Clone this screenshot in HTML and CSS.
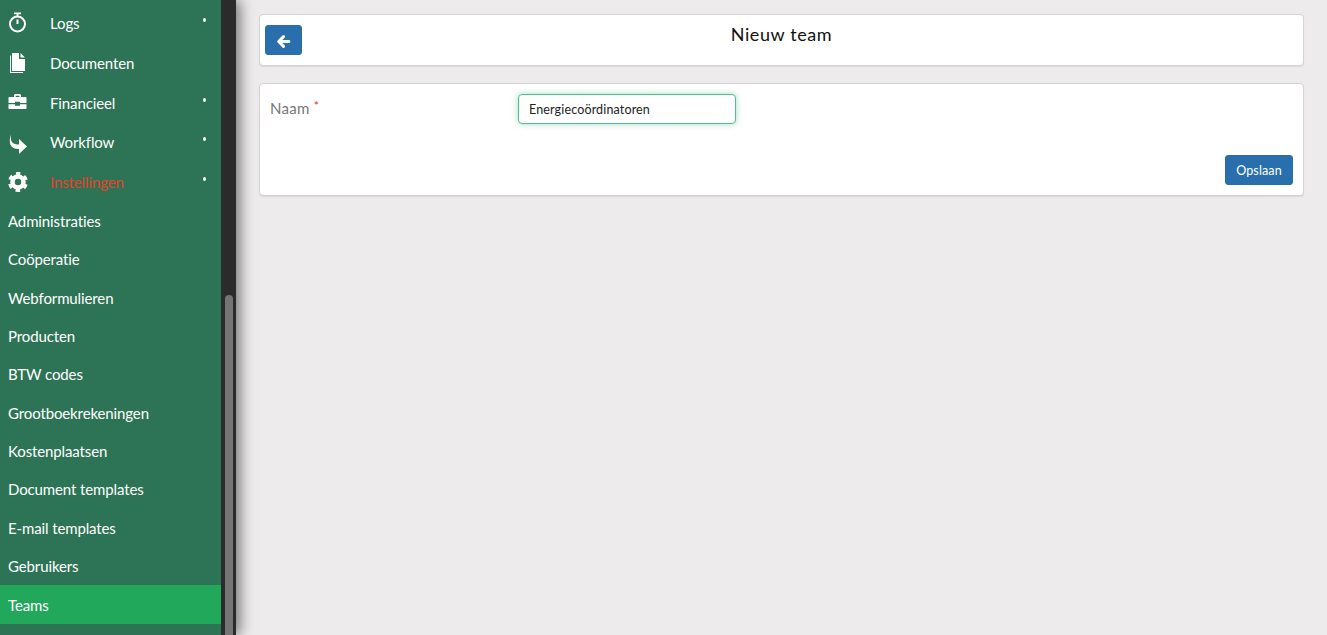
FILE: index.html
```html
<!DOCTYPE html>
<html lang="nl">
<head>
<meta charset="utf-8">
<title>Nieuw team</title>
<link rel="stylesheet" href="styles.css">
</head>
<body>
<div class="app">
  <aside class="sidebar">
    <nav class="nav">
      <a class="item">
        <svg class="icon" viewBox="0 0 20 22"><path fill="none" stroke="#fff" stroke-width="2" d="M9.500 4.500a7.500 7.500 0 1 0 0 15a7.500 7.500 0 1 0 0-15zM9.500 12V7.500"/><path fill="#fff" d="M6 .5h7v1.700h-2.600V5H8.600V2.200H6z"/></svg>
        <span class="label">Logs</span><span class="caret"></span>
      </a>
      <a class="item">
        <svg class="icon" viewBox="0 0 20 22"><path fill="#fff" d="M4 1h7v6h6v12H4z"/><path fill="#fff" d="M12.500 1l4.500 4.500h-4.500zM2 3.500V21h13v-.9H2.900V3.500z"/></svg>
        <span class="label">Documenten</span><span class="caret"></span>
      </a>
      <a class="item">
        <svg class="icon" viewBox="0 0 20 22"><path fill="#fff" fill-rule="evenodd" d="M6 5V3.500C6 2.700 6.700 2 7.500 2h4c.8 0 1.500.7 1.500 1.500V5h4.500c.6 0 1 .4 1 1v5H12V9.700H7V11H.5V6c0-.6.4-1 1-1zM7.700 5h3.600V3.700H7.700zM.5 12.200H7v1.500h5v-1.500h6.500V16c0 .6-.4 1-1 1h-16c-.6 0-1-.4-1-1z"/></svg>
        <span class="label">Financieel</span><span class="caret"></span>
      </a>
      <a class="item">
        <svg class="icon" viewBox="0 0 20 22"><path fill="#fff" d="M3 3.500C2.500 8 3 10.500 5 12c1.500 1 4 1.500 6 1.500V8l8 7.500L11 23v-5c-4.500 0-7.500-1.500-8.700-4.500C1.300 10.500 1.800 6.500 3 3.500z"/></svg>
        <span class="label">Workflow</span><span class="caret"></span>
      </a>
      <a class="item active">
        <svg class="icon" viewBox="0 0 20 22"><circle class="gear-ring" cx="10" cy="11" r="5.500"/><circle class="gear-teeth" cx="10" cy="11" r="8.500" transform="rotate(-90 10 11)"/></svg>
        <span class="label">Instellingen</span><span class="caret"></span>
      </a>
      <a class="sub">Administraties</a>
      <a class="sub">Coöperatie</a>
      <a class="sub">Webformulieren</a>
      <a class="sub">Producten</a>
      <a class="sub">BTW codes</a>
      <a class="sub">Grootboekrekeningen</a>
      <a class="sub">Kostenplaatsen</a>
      <a class="sub">Document templates</a>
      <a class="sub">E-mail templates</a>
      <a class="sub">Gebruikers</a>
      <a class="sub current">Teams</a>
    </nav>
    <div class="track"><div class="thumb"></div></div>
  </aside>
  <main class="main">
    <section class="panel head">
      <button class="btn back" aria-label="Terug">
        <svg viewBox="0 0 14 14" width="15" height="15"><path fill="none" stroke="#fff" stroke-width="2.800" stroke-linecap="round" stroke-linejoin="round" d="M12 7H3M7 2.500L2.500 7L7 11.500"/></svg>
      </button>
      <h1 class="title">Nieuw team</h1>
    </section>
    <section class="panel form">
      <div class="field">
        <label class="name">Naam <span class="req">*</span></label>
        <input class="input" value="Energiecoördinatoren">
      </div>
      <div class="actions"><button class="btn save">Opslaan</button></div>
    </section>
  </main>
</div>
</body>
</html>
```
FILE: styles.css
```css
* { box-sizing: border-box; }
html, body { margin: 0; height: 100%; overflow: hidden; }
body { font-family: "Lato", "Liberation Sans", sans-serif; background: #edebec; }
.app { display: flex; height: 635px; }
.sidebar { width: 236px; flex: none; display: flex; background: #2c2b2c; position: relative; box-shadow: 4px 0 13px rgba(0,0,0,.5); }
.nav { width: 221px; flex: none; background: #2d7355; padding-top: 3.600px; color: #fff; overflow: hidden; }
.item { height: 39.600px; display: flex; align-items: center; padding-left: 8px; font-size: 15px; letter-spacing: -.12px; }
.icon { width: 20px; height: 22px; flex: none; overflow: visible; }
.gear-ring { fill: none; stroke: #fff; stroke-width: 4.500px; }
.gear-teeth { fill: none; stroke: #fff; stroke-width: 3px; stroke-dasharray: 4.500 4.400; stroke-dashoffset: 2.250; }
.label { margin-left: 22px; flex: 1; }
.caret { width: 3px; height: 4px; margin-right: 15px; margin-bottom: 6px; background: #fff; border-radius: 50%; }
.item:nth-child(2) .caret { visibility: hidden; }
.active .label { color: #e8412a; }
.sub { display: flex; align-items: center; height: 38.400px; padding-left: 8px; font-size: 15px; letter-spacing: -.12px; }
.current { background: #22a85b; }
.track { width: 15px; padding: 295px 3px 0 4px; }
.thumb { width: 8px; height: 100%; background: #757575; border-radius: 4px 4px 0 0; }
.main { flex: 1; padding: 14px 23px 0; }
.panel { background: #fff; border: 1px solid #d5d3d4; border-radius: 4px; box-shadow: 0 1px 1px rgba(0,0,0,.08); margin-bottom: 17px; }
.head { height: 52px; position: relative; padding: 10px 5px; }
.title { margin: 0; position: absolute; top: 7px; left: 0; right: 0; text-align: center; font-size: 18px; font-weight: 400; letter-spacing: .6px; color: #111; line-height: 24px; }
.btn { background: #2a6fad; border: 1px solid #2e6da4; border-radius: 3px; color: #fff; font-family: inherit; padding: 0; }
.back { width: 37px; height: 30px; display: flex; align-items: center; justify-content: center; padding-top: 2px; }
.form { height: 113px; padding: 10px 10px 0; }
.field { display: flex; align-items: flex-start; height: 61px; }
.name { width: 248px; font-size: 15px; color: #777; padding-top: 4px; letter-spacing: .3px; }
.req { color: #e8262a; font-size: 12px; vertical-align: 4px; }
.input { width: 218px; height: 30px; border: 1px solid #55bd91; border-radius: 4px; padding: 0 10px; font-size: 12.500px; font-family: inherit; color: #222; box-shadow: 0 0 6px rgba(85,189,145,.55); outline: none; letter-spacing: .15px; }
.actions { display: flex; justify-content: flex-end; }
.save { width: 68px; height: 30px; font-size: 12.500px; letter-spacing: .15px; }
```
